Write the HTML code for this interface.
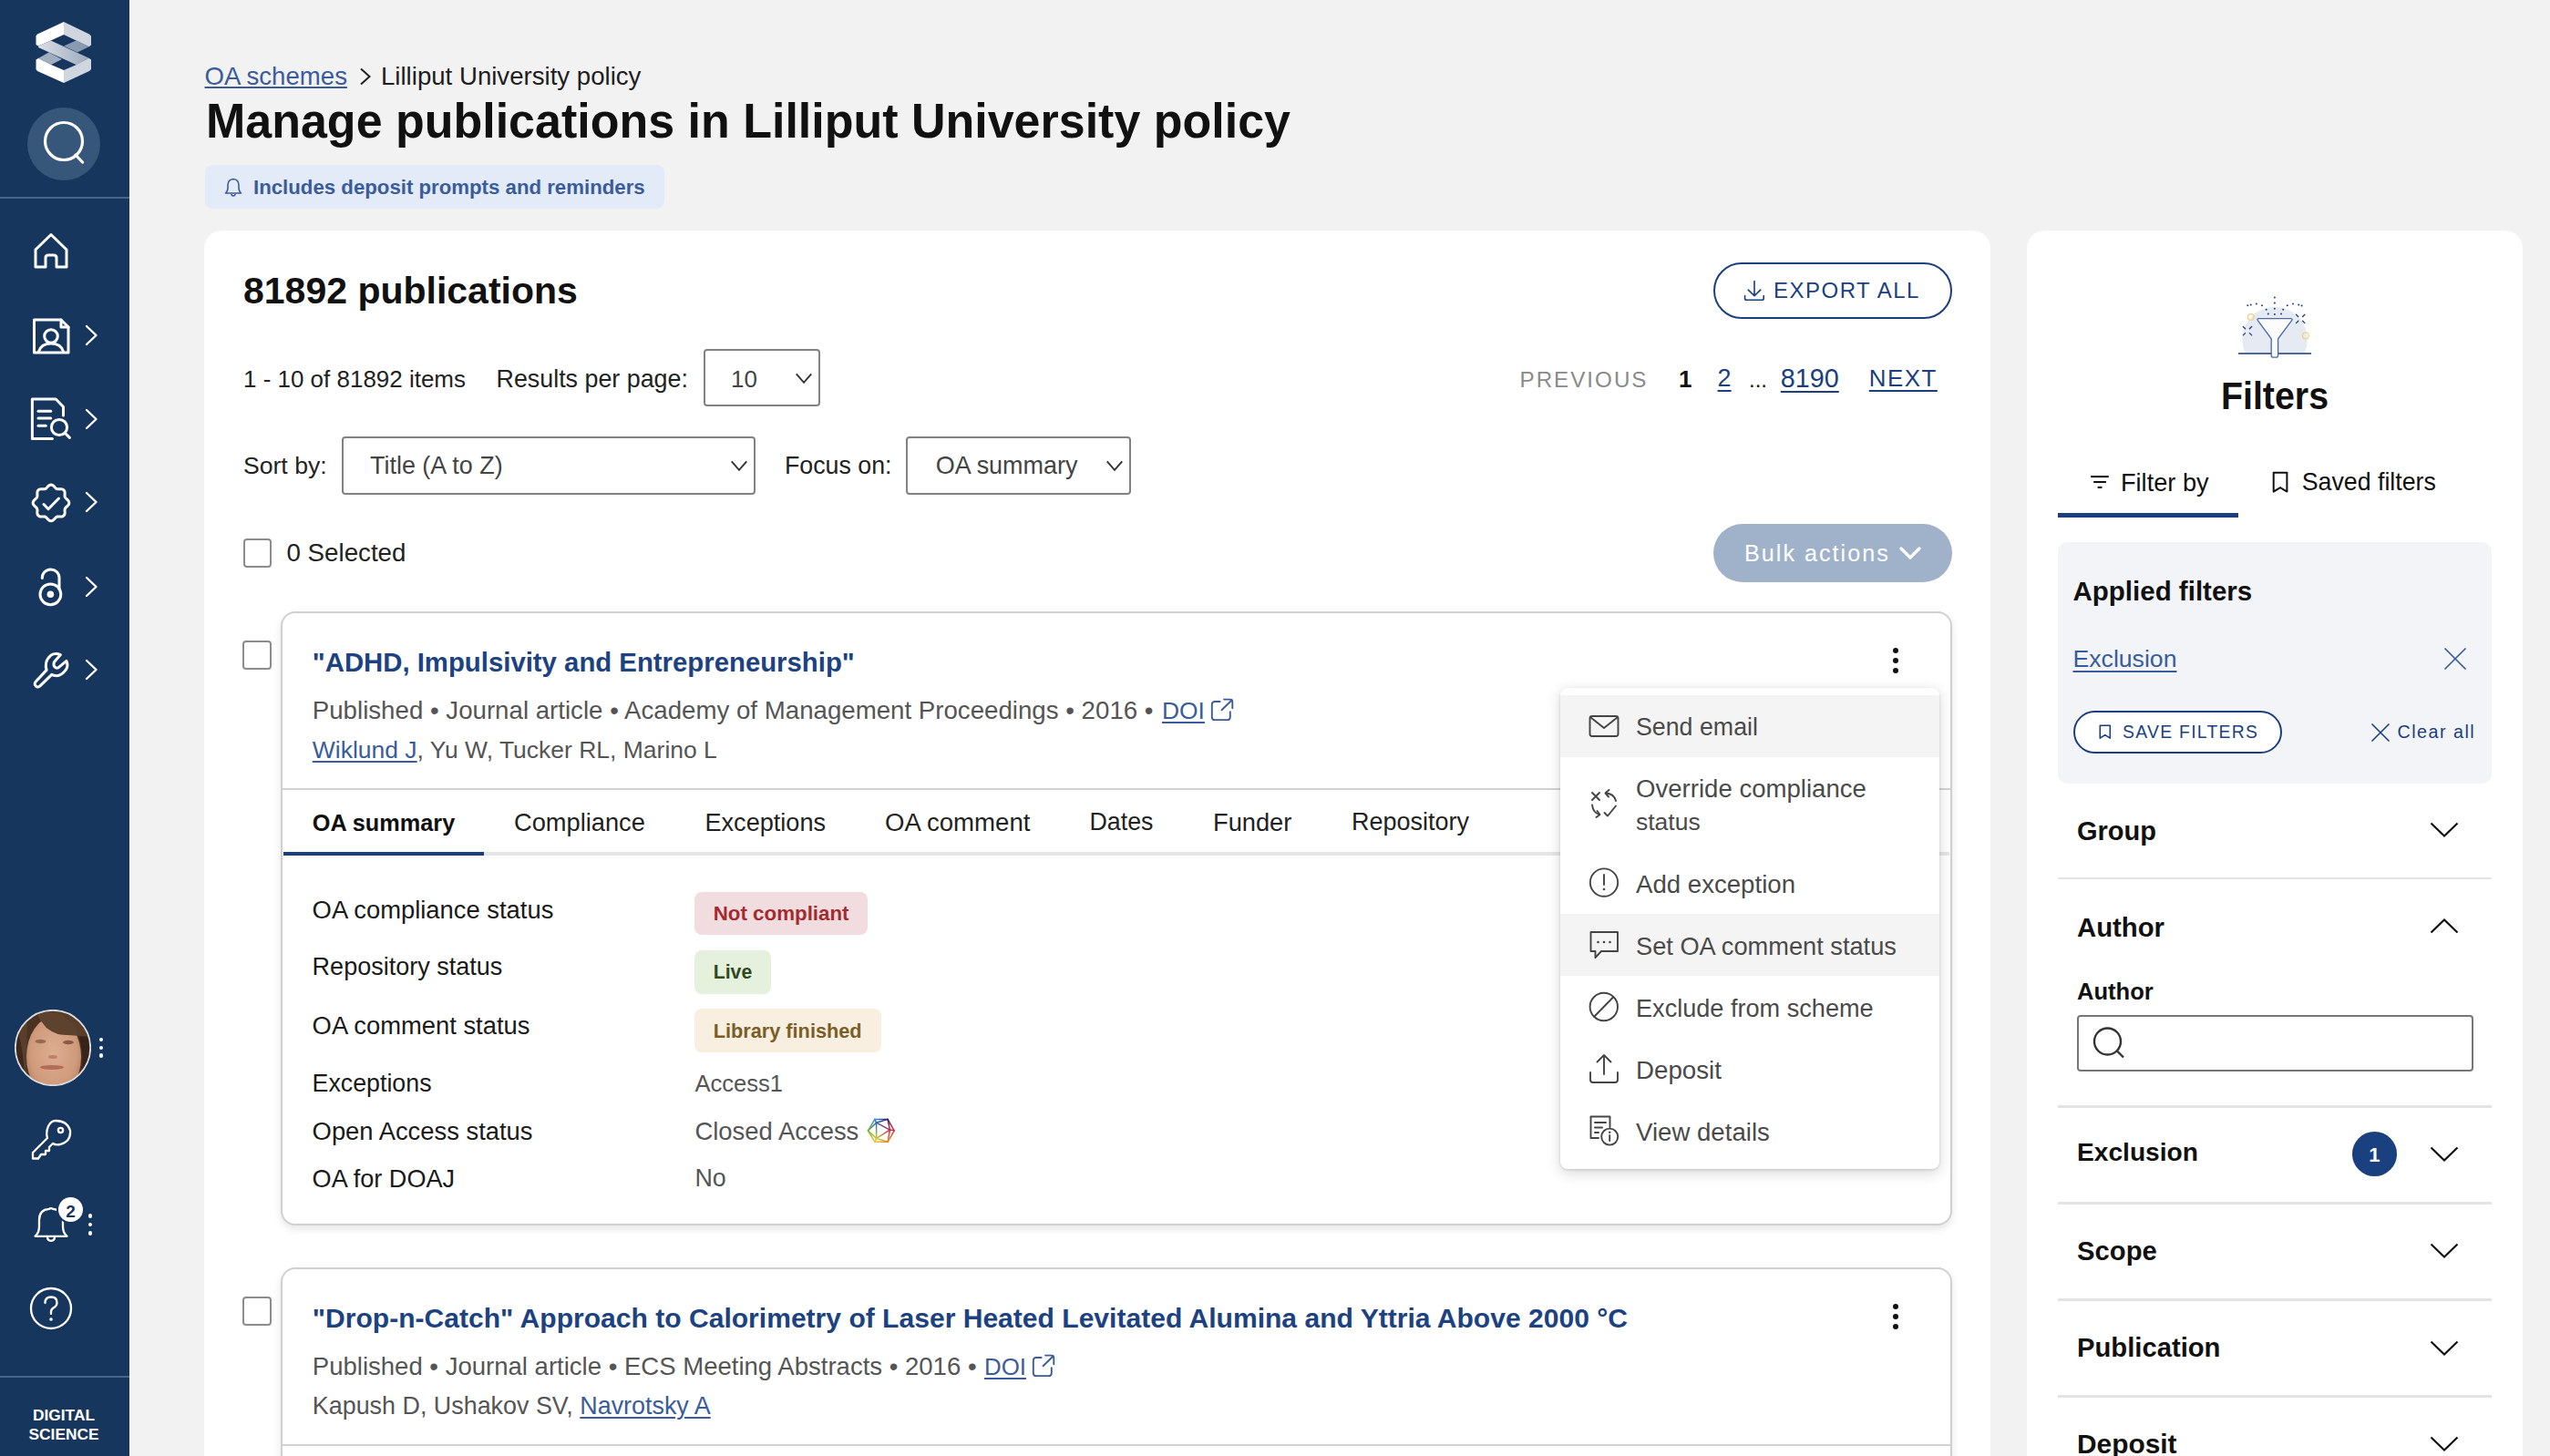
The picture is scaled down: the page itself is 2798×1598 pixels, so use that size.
<!DOCTYPE html><html><head><meta charset="utf-8"><style>
html,body{margin:0;padding:0;width:2798px;height:1598px;overflow:hidden;background:#f2f2f2;font-family:"Liberation Sans", sans-serif}
.a{position:absolute}.t{position:absolute;white-space:nowrap;line-height:1}
</style></head><body>
<div class="a" style="left:0;top:0;width:142px;height:1598px;background:#17365e"></div>
<div class="a" style="left:0;top:216px;width:142px;height:2px;background:#4a6585"></div>
<div class="a" style="left:0;top:1510px;width:142px;height:2px;background:#4a6585"></div>
<svg class="a" style="left:20px;top:10px" width="100" height="100" viewBox="0 0 100 100">
<defs><linearGradient id="lg1" x1="0" x2="1" y1="0" y2="0"><stop offset="0" stop-color="#d9dee6"/><stop offset="1" stop-color="#9dabbd"/></linearGradient></defs>
<polygon fill="#ffffff" points="50,14 21,27.5 19.5,29.5 19.5,39 22,40.5 35.7,34.5 50,28"/>
<polygon fill="#d0d6df" points="50,14 78,27.5 80,29.5 80,39.5 77.6,41.2 63.5,34.5 50,28"/>
<polygon fill="#8a9ab0" points="63.5,34.5 77.6,41.2 65,47.4 50,40.5"/>
<polygon fill="#a1aec0" points="22,54 33.6,47.4 48,55 36,61"/>
<polygon fill="url(#lg1)" points="22,40.5 35.7,34.5 77.6,53.8 64,61.3 22,42"/>
<polygon fill="#ffffff" points="22,54 19.5,55.5 19.5,66 21,68 50,81 50,67 36,61"/>
<polygon fill="#d0d6df" points="50,67 64,61 77.6,53.8 80,55.5 80,66 78,68 50,81"/>
</svg>
<div class="a" style="left:30px;top:118px;width:80px;height:80px;border-radius:50%;background:#36577a"></div>
<svg class="a" style="left:30px;top:118px" width="80" height="80" viewBox="0 0 80 80"><circle cx="40" cy="37" r="20.5" fill="none" stroke="#fff" stroke-width="3.2"/><line x1="53" y1="52" x2="60.5" y2="60" stroke="#fff" stroke-width="3.2" stroke-linecap="round"/></svg>
<svg class="a" style="left:30px;top:250px" width="52" height="52" viewBox="0 0 52 52"><path d="M9,24 L26,7.5 L43,24 L43,43 L32,43 L32,33 Q32,30 29,30 L23,30 Q20,30 20,33 L20,43 L9,43 Z" fill="none" stroke="#fff" stroke-width="3" stroke-linejoin="round" stroke-linecap="round"/></svg>
<svg class="a" style="left:30px;top:343px" width="52" height="52" viewBox="0 0 52 52"><path d="M7.5,8 L37,8 L45,16 L45,44 L7.5,44 Z" fill="none" stroke="#fff" stroke-width="3" stroke-linejoin="round" stroke-linecap="round"/><path d="M37,8 L37,16 L45,16" fill="none" stroke="#fff" stroke-width="3" stroke-linejoin="round" stroke-linecap="round"/><circle cx="26" cy="26" r="7.3" fill="none" stroke="#fff" stroke-width="3" stroke-linejoin="round" stroke-linecap="round"/><path d="M12.5,43 Q15,34 26,34 Q37,34 39.5,43" fill="none" stroke="#fff" stroke-width="3" stroke-linejoin="round" stroke-linecap="round"/></svg>
<svg class="a" style="left:90px;top:355px" width="20" height="26" viewBox="0 0 20 26"><polyline points="5,3 15.5,13 5,23" fill="none" stroke="#fff" stroke-width="2.4" stroke-linejoin="round" stroke-linecap="round"/></svg>
<svg class="a" style="left:30px;top:434px" width="52" height="52" viewBox="0 0 52 52"><path d="M27.4,47.5 L5.4,47.5 L5.4,4 L31.2,4 L39.5,12.5 L39.5,22" fill="none" stroke="#fff" stroke-width="3" stroke-linejoin="round" stroke-linecap="round"/><line x1="12" y1="17.3" x2="25.7" y2="17.3" fill="none" stroke="#fff" stroke-width="3" stroke-linejoin="round" stroke-linecap="round"/><line x1="12" y1="25" x2="25.7" y2="25" fill="none" stroke="#fff" stroke-width="3" stroke-linejoin="round" stroke-linecap="round"/><line x1="12" y1="33.3" x2="20.2" y2="33.3" fill="none" stroke="#fff" stroke-width="3" stroke-linejoin="round" stroke-linecap="round"/><circle cx="35" cy="35" r="8.6" fill="none" stroke="#fff" stroke-width="3" stroke-linejoin="round" stroke-linecap="round"/><line x1="41.2" y1="41.2" x2="46.4" y2="46.4" fill="none" stroke="#fff" stroke-width="3" stroke-linejoin="round" stroke-linecap="round"/></svg>
<svg class="a" style="left:90px;top:447px" width="20" height="26" viewBox="0 0 20 26"><polyline points="5,3 15.5,13 5,23" fill="none" stroke="#fff" stroke-width="2.4" stroke-linejoin="round" stroke-linecap="round"/></svg>
<svg class="a" style="left:30px;top:526px" width="52" height="52" viewBox="0 0 52 52"><path d="M26.00,6.10 L26.77,6.19 L27.53,6.47 L28.25,6.89 L28.92,7.44 L29.55,8.05 L30.13,8.68 L30.68,9.29 L31.22,9.82 L31.77,10.25 L32.35,10.56 L32.98,10.75 L33.67,10.84 L34.43,10.84 L35.25,10.80 L36.11,10.77 L36.99,10.78 L37.85,10.87 L38.66,11.08 L39.39,11.42 L40.00,11.90 L40.48,12.51 L40.82,13.24 L41.03,14.05 L41.12,14.91 L41.13,15.79 L41.10,16.65 L41.06,17.47 L41.06,18.23 L41.15,18.92 L41.34,19.55 L41.65,20.13 L42.08,20.68 L42.61,21.22 L43.22,21.77 L43.85,22.35 L44.46,22.98 L45.01,23.65 L45.43,24.37 L45.71,25.13 L45.80,25.90 L45.71,26.67 L45.43,27.43 L45.01,28.15 L44.46,28.82 L43.85,29.45 L43.22,30.03 L42.61,30.58 L42.08,31.12 L41.65,31.67 L41.34,32.25 L41.15,32.88 L41.06,33.57 L41.06,34.33 L41.10,35.15 L41.13,36.01 L41.12,36.89 L41.03,37.75 L40.82,38.56 L40.48,39.29 L40.00,39.90 L39.39,40.38 L38.66,40.72 L37.85,40.93 L36.99,41.02 L36.11,41.03 L35.25,41.00 L34.43,40.96 L33.67,40.96 L32.98,41.05 L32.35,41.24 L31.77,41.55 L31.22,41.98 L30.68,42.51 L30.13,43.12 L29.55,43.75 L28.92,44.36 L28.25,44.91 L27.53,45.33 L26.77,45.61 L26.00,45.70 L25.23,45.61 L24.47,45.33 L23.75,44.91 L23.08,44.36 L22.45,43.75 L21.87,43.12 L21.32,42.51 L20.78,41.98 L20.23,41.55 L19.65,41.24 L19.02,41.05 L18.33,40.96 L17.57,40.96 L16.75,41.00 L15.89,41.03 L15.01,41.02 L14.15,40.93 L13.34,40.72 L12.61,40.38 L12.00,39.90 L11.52,39.29 L11.18,38.56 L10.97,37.75 L10.88,36.89 L10.87,36.01 L10.90,35.15 L10.94,34.33 L10.94,33.57 L10.85,32.88 L10.66,32.25 L10.35,31.67 L9.92,31.12 L9.39,30.58 L8.78,30.03 L8.15,29.45 L7.54,28.82 L6.99,28.15 L6.57,27.43 L6.29,26.67 L6.20,25.90 L6.29,25.13 L6.57,24.37 L6.99,23.65 L7.54,22.98 L8.15,22.35 L8.78,21.77 L9.39,21.22 L9.92,20.68 L10.35,20.13 L10.66,19.55 L10.85,18.92 L10.94,18.23 L10.94,17.47 L10.90,16.65 L10.87,15.79 L10.88,14.91 L10.97,14.05 L11.18,13.24 L11.52,12.51 L12.00,11.90 L12.61,11.42 L13.34,11.08 L14.15,10.87 L15.01,10.78 L15.89,10.77 L16.75,10.80 L17.57,10.84 L18.33,10.84 L19.02,10.75 L19.65,10.56 L20.23,10.25 L20.78,9.82 L21.32,9.29 L21.87,8.68 L22.45,8.05 L23.08,7.44 L23.75,6.89 L24.47,6.47 L25.23,6.19 L26.00,6.10 Z" fill="none" stroke="#fff" stroke-width="3" stroke-linejoin="round" stroke-linecap="round"/><polyline points="18,27.5 23,32.7 34.5,21" fill="none" stroke="#fff" stroke-width="3" stroke-linejoin="round" stroke-linecap="round"/></svg>
<svg class="a" style="left:90px;top:538px" width="20" height="26" viewBox="0 0 20 26"><polyline points="5,3 15.5,13 5,23" fill="none" stroke="#fff" stroke-width="2.4" stroke-linejoin="round" stroke-linecap="round"/></svg>
<svg class="a" style="left:30px;top:618px" width="52" height="52" viewBox="0 0 52 52"><path d="M16.3,16.5 A9.35,9.35 0 0 1 35,16 L35,28.8" fill="none" stroke="#fff" stroke-width="3" stroke-linejoin="round" stroke-linecap="round"/><circle cx="25.4" cy="34.3" r="11.4" fill="none" stroke="#fff" stroke-width="3" stroke-linejoin="round" stroke-linecap="round"/><circle cx="25.4" cy="34.3" r="3.8" fill="#fff"/></svg>
<svg class="a" style="left:90px;top:631px" width="20" height="26" viewBox="0 0 20 26"><polyline points="5,3 15.5,13 5,23" fill="none" stroke="#fff" stroke-width="2.4" stroke-linejoin="round" stroke-linecap="round"/></svg>
<svg class="a" style="left:30px;top:709px" width="52" height="52" viewBox="0 0 52 52"><path d="M21.1,26.4 C19.5,22 19.8,15 25.7,10.3 C28.5,8.5 33,8.3 36.4,9.6 L29.3,17.8 C28.9,20 29,22 29.6,22.4 C30.5,23.8 32.5,24.4 33.9,23.9 L42.9,16.4 C44.5,20 44,24 41.8,26.7 C39,30.5 35,33 31.1,32.6 C29.5,32.5 28,32 26.8,31.4 L13.9,43.9 C12.5,45.2 10.5,45.3 9.3,43.9 C7.8,42.5 7.8,40.5 9.3,39 Z" fill="none" stroke="#fff" stroke-width="3" stroke-linejoin="round" stroke-linecap="round"/></svg>
<svg class="a" style="left:90px;top:722px" width="20" height="26" viewBox="0 0 20 26"><polyline points="5,3 15.5,13 5,23" fill="none" stroke="#fff" stroke-width="2.4" stroke-linejoin="round" stroke-linecap="round"/></svg>
<svg class="a" style="left:16px;top:1108px" width="84" height="84" viewBox="0 0 84 84">
<defs><clipPath id="avc"><circle cx="42" cy="42" r="41"/></clipPath>
<radialGradient id="skin" cx="0.5" cy="0.45" r="0.6"><stop offset="0" stop-color="#dcae92"/><stop offset="0.7" stop-color="#d09a7c"/><stop offset="1" stop-color="#b07a5a"/></radialGradient></defs>
<g clip-path="url(#avc)">
<rect x="0" y="0" width="84" height="84" fill="#4a3222"/>
<ellipse cx="43" cy="52" rx="30" ry="44" fill="url(#skin)"/>
<path d="M10,0 L84,0 L84,42 Q78,30 70,28.5 Q58,28 48,27 Q40,24 35,20 Q29,13 24,4 Q18,6 14,14 L12,84 L0,84 L0,0 Z" fill="#5a3e2c"/>
<path d="M24,4 Q29,13 35,20 Q40,24 48,27 Q58,28 70,28.5 Q66,14 52,6 Q38,0 24,4 Z" fill="#5e4230"/>
<path d="M71,29 Q77,50 73,84 L84,84 L84,30 Z" fill="#36241a"/>
<path d="M0,18 Q9,30 12,84 L0,84 Z" fill="#3e2a1c"/>
<ellipse cx="28.5" cy="35" rx="6" ry="2.2" fill="#8a5a44" opacity="0.8"/>
<ellipse cx="59" cy="36" rx="6" ry="2.2" fill="#7a4a36" opacity="0.8"/>
<ellipse cx="42" cy="52" rx="5" ry="2" fill="#b07058" opacity="0.7"/>
<ellipse cx="41" cy="63.5" rx="13" ry="2.4" fill="#a85a48" opacity="0.75"/>
</g>
<circle cx="42" cy="42" r="41.2" fill="none" stroke="#dcdcdc" stroke-width="1.8"/>
</svg>
<div class="a" style="left:108.7px;top:1138.9px;width:4.6px;height:4.6px;border-radius:50%;background:#fff"></div>
<div class="a" style="left:108.7px;top:1147.8px;width:4.6px;height:4.6px;border-radius:50%;background:#fff"></div>
<div class="a" style="left:108.7px;top:1156.4px;width:4.6px;height:4.6px;border-radius:50%;background:#fff"></div>
<svg class="a" style="left:30px;top:1225px" width="52" height="52" viewBox="0 0 52 52"><path d="M31,5 Q44,5 47,16 Q48,28 36,31 Q31,32 28,30 L24,34 L24,38 L20,38 L20,42 L15,42 L12,46.5 L6,46.5 L6,40 L22,24 Q20,18 23,11 Q26,5 31,5 Z" fill="none" stroke="#fff" stroke-width="2.3" stroke-linejoin="round" stroke-linecap="round"/><circle cx="36.5" cy="15.5" r="2.6" fill="none" stroke="#fff" stroke-width="2.3" stroke-linejoin="round" stroke-linecap="round"/></svg>
<svg class="a" style="left:30px;top:1318px" width="52" height="52" viewBox="0 0 52 52"><path d="M8.5,38.8 Q13,35 13,28 L13,21 Q13,9.5 24,8.8 Q26,7.5 28,8.8 Q39,9.5 39,21 L39,28 Q39,35 43.5,38.8 Z" fill="none" stroke="#fff" stroke-width="2.3" stroke-linejoin="round" stroke-linecap="round"/><path d="M22,39.3 Q22,43.8 26,43.8 Q30,43.8 30,39.3" fill="none" stroke="#fff" stroke-width="2.3" stroke-linejoin="round" stroke-linecap="round"/></svg>
<div class="a" style="left:64px;top:1313.5px;width:27px;height:27px;border-radius:50%;background:#fff;box-shadow:0 0 0 2px #17365e"></div>
<div class="a" style="left:96.7px;top:1332.1px;width:4.6px;height:4.6px;border-radius:50%;background:#fff"></div>
<div class="a" style="left:96.7px;top:1341.7px;width:4.6px;height:4.6px;border-radius:50%;background:#fff"></div>
<div class="a" style="left:96.7px;top:1351.0px;width:4.6px;height:4.6px;border-radius:50%;background:#fff"></div>
<svg class="a" style="left:30px;top:1410px" width="52" height="52" viewBox="0 0 52 52"><circle cx="26" cy="26" r="22" fill="none" stroke="#fff" stroke-width="2.3" stroke-linejoin="round" stroke-linecap="round"/><path d="M19.5,20 Q19.5,13.5 26,13.5 Q32.5,13.5 32.5,19.5 Q32.5,23.5 28.5,25.5 Q26,27 26,30 L26,32" fill="none" stroke="#fff" stroke-width="2.3" stroke-linejoin="round" stroke-linecap="round"/><circle cx="26" cy="38" r="1.8" fill="#fff"/></svg>
<svg class="a" style="left:390px;top:72px" width="22" height="24" viewBox="0 0 22 24"><polyline points="6,3.5 15.5,12 6,20.5" fill="none" stroke="#222" stroke-width="2"/></svg>
<div class="a" style="left:224.5px;top:181px;width:504.5px;height:48px;border-radius:8px;background:#e3ebf8"></div>
<svg class="a" style="left:244px;top:193px" width="24" height="24" viewBox="0 0 24 24"><path d="M3.5,19 Q6,17 6,13 L6,10.5 Q6,4 12,3.5 Q18,4 18,10.5 L18,13 Q18,17 20.5,19 Z" fill="none" stroke="#3a5c9c" stroke-width="1.6" stroke-linejoin="round"/><path d="M10,20 Q10,22 12,22 Q14,22 14,20" fill="none" stroke="#3a5c9c" stroke-width="1.6"/></svg>
<div class="a" style="left:224px;top:253px;width:1960px;height:1400px;border-radius:20px;background:#fff"></div>
<div class="a" style="left:1879.5px;top:287.5px;width:262px;height:62.5px;box-sizing:border-box;border:2.2px solid #1b3f7e;border-radius:32px"></div>
<svg class="a" style="left:1910px;top:305px" width="30" height="30" viewBox="0 0 30 30"><path d="M15,3.5 L15,19.3 M8.2,13.2 L15,19.6 L21.8,13.2" fill="none" stroke="#1b3f7e" stroke-width="1.6" stroke-linecap="round" stroke-linejoin="round"/><path d="M4.6,19.6 L4.6,22.4 Q4.6,24.3 6.6,24.3 L23.3,24.3 Q25.2,24.3 25.2,22.4 L25.2,19.6" fill="none" stroke="#1b3f7e" stroke-width="1.6" stroke-linecap="round" stroke-linejoin="round"/></svg>
<div class="a" style="left:772.0px;top:383.2px;width:127.7px;height:63.3px;box-sizing:border-box;border:2px solid #828282;border-radius:4px;background:#fff"></div>
<svg class="a" style="left:870.0px;top:404.9px" width="24" height="16" viewBox="0 0 24 16"><polyline points="3.75,5.4 12,14.8 20.25,5.4" fill="none" stroke="#333" stroke-width="1.9"/></svg>
<div class="a" style="left:375.0px;top:478.5px;width:453.7px;height:64.0px;box-sizing:border-box;border:2px solid #828282;border-radius:4px;background:#fff"></div>
<svg class="a" style="left:799.0px;top:500.5px" width="24" height="16" viewBox="0 0 24 16"><polyline points="3.75,5.4 12,14.8 20.25,5.4" fill="none" stroke="#333" stroke-width="1.9"/></svg>
<div class="a" style="left:994.4px;top:479.0px;width:246.3px;height:63.5px;box-sizing:border-box;border:2px solid #828282;border-radius:4px;background:#fff"></div>
<svg class="a" style="left:1211.0px;top:500.8px" width="24" height="16" viewBox="0 0 24 16"><polyline points="3.75,5.4 12,14.8 20.25,5.4" fill="none" stroke="#333" stroke-width="1.9"/></svg>
<div class="a" style="left:266.5px;top:591.0px;width:31.5px;height:31.5px;box-sizing:border-box;border:2px solid #8c8c8c;border-radius:4px;background:#fff"></div>
<div class="a" style="left:1879.5px;top:575px;width:262px;height:64px;border-radius:32px;background:#a0b2ca"></div>
<svg class="a" style="left:2082px;top:598px" width="28" height="20" viewBox="0 0 28 20"><polyline points="4,4 14,14 24,4" fill="none" stroke="#fff" stroke-width="3.2" stroke-linecap="round" stroke-linejoin="round"/></svg>
<div class="a" style="left:308px;top:671.0px;width:1834px;height:674.0px;box-sizing:border-box;border:2px solid #d0d0d0;border-radius:16px;background:#fff;box-shadow:0 4px 8px rgba(0,0,0,0.10)"></div>
<div class="a" style="left:266.0px;top:703.0px;width:31.5px;height:31.5px;box-sizing:border-box;border:2px solid #8c8c8c;border-radius:4px;background:#fff"></div>
<div class="a" style="left:2076.9px;top:710.9px;width:6.2px;height:6.2px;border-radius:50%;background:#111"></div>
<div class="a" style="left:2076.9px;top:721.9px;width:6.2px;height:6.2px;border-radius:50%;background:#111"></div>
<div class="a" style="left:2076.9px;top:732.9px;width:6.2px;height:6.2px;border-radius:50%;background:#111"></div>
<svg class="a" style="left:1328.0px;top:764.0px" width="28" height="30" viewBox="0 0 28 30"><path d="M10.6,6 L5,6 Q1.8,6 1.8,9.2 L1.8,22.9 Q1.8,26.1 5,26.1 L18.6,26.1 Q21.8,26.1 21.8,22.9 L21.8,17.2" fill="none" stroke="#3a5c9c" stroke-width="1.9" stroke-linecap="round" stroke-linejoin="round"/><path d="M12.5,15.3 L23.8,4.2 M15,3.6 L21.5,3.6 Q24.3,3.6 24.3,6.4 L24.3,13.3" fill="none" stroke="#3a5c9c" stroke-width="1.9" stroke-linecap="round" stroke-linejoin="round"/></svg>
<div class="a" style="left:309px;top:865.0px;width:1832px;height:2px;background:#d2d2d2"></div>
<div class="a" style="left:308px;top:1391.0px;width:1834px;height:310.0px;box-sizing:border-box;border:2px solid #d0d0d0;border-radius:16px;background:#fff;box-shadow:0 4px 8px rgba(0,0,0,0.10)"></div>
<div class="a" style="left:266.0px;top:1423.0px;width:31.5px;height:31.5px;box-sizing:border-box;border:2px solid #8c8c8c;border-radius:4px;background:#fff"></div>
<div class="a" style="left:2076.9px;top:1430.9px;width:6.2px;height:6.2px;border-radius:50%;background:#111"></div>
<div class="a" style="left:2076.9px;top:1441.9px;width:6.2px;height:6.2px;border-radius:50%;background:#111"></div>
<div class="a" style="left:2076.9px;top:1452.9px;width:6.2px;height:6.2px;border-radius:50%;background:#111"></div>
<svg class="a" style="left:1132.0px;top:1484.0px" width="28" height="30" viewBox="0 0 28 30"><path d="M10.6,6 L5,6 Q1.8,6 1.8,9.2 L1.8,22.9 Q1.8,26.1 5,26.1 L18.6,26.1 Q21.8,26.1 21.8,22.9 L21.8,17.2" fill="none" stroke="#3a5c9c" stroke-width="1.9" stroke-linecap="round" stroke-linejoin="round"/><path d="M12.5,15.3 L23.8,4.2 M15,3.6 L21.5,3.6 Q24.3,3.6 24.3,6.4 L24.3,13.3" fill="none" stroke="#3a5c9c" stroke-width="1.9" stroke-linecap="round" stroke-linejoin="round"/></svg>
<div class="a" style="left:309px;top:1585.0px;width:1832px;height:2px;background:#d2d2d2"></div>
<div class="a" style="left:311px;top:935px;width:1828px;height:4px;background:#e6e6e6"></div>
<div class="a" style="left:311px;top:934.5px;width:220px;height:4.5px;background:#1b3f7e"></div>
<div class="a" style="left:762.0px;top:978.8px;width:190.0px;height:47.6px;border-radius:8px;background:#f1dde0"></div>
<div class="a" style="left:762.0px;top:1042.9px;width:84.0px;height:47.8px;border-radius:8px;background:#e6f1dd"></div>
<div class="a" style="left:762.0px;top:1107.0px;width:204.8px;height:47.7px;border-radius:8px;background:#f8efe0"></div>
<svg class="a" style="left:950px;top:1226px" width="34" height="30" viewBox="0 0 34 30"><defs><linearGradient id="dg0" gradientUnits="userSpaceOnUse" x1="9.9" y1="2.4" x2="24.0" y2="2.4"><stop offset="0" stop-color="#3a8fd8"/><stop offset="1" stop-color="#3a1f70"/></linearGradient><linearGradient id="dg1" gradientUnits="userSpaceOnUse" x1="24.0" y1="2.4" x2="31.2" y2="14.8"><stop offset="0" stop-color="#3a1f70"/><stop offset="1" stop-color="#d8383a"/></linearGradient><linearGradient id="dg2" gradientUnits="userSpaceOnUse" x1="31.2" y1="14.8" x2="24.0" y2="27.3"><stop offset="0" stop-color="#d8383a"/><stop offset="1" stop-color="#e88a28"/></linearGradient><linearGradient id="dg3" gradientUnits="userSpaceOnUse" x1="24.0" y1="27.3" x2="9.9" y2="27.3"><stop offset="0" stop-color="#e88a28"/><stop offset="1" stop-color="#e8c838"/></linearGradient><linearGradient id="dg4" gradientUnits="userSpaceOnUse" x1="9.9" y1="27.3" x2="2.5" y2="15.0"><stop offset="0" stop-color="#e8c838"/><stop offset="1" stop-color="#78b838"/></linearGradient><linearGradient id="dg5" gradientUnits="userSpaceOnUse" x1="2.5" y1="15.0" x2="9.9" y2="2.4"><stop offset="0" stop-color="#78b838"/><stop offset="1" stop-color="#3a8fd8"/></linearGradient><linearGradient id="dg6" gradientUnits="userSpaceOnUse" x1="11.6" y1="6.2" x2="24.0" y2="2.4"><stop offset="0" stop-color="#3060b0"/><stop offset="1" stop-color="#3a1f70"/></linearGradient><linearGradient id="dg7" gradientUnits="userSpaceOnUse" x1="11.6" y1="6.2" x2="26.4" y2="14.1"><stop offset="0" stop-color="#3060b0"/><stop offset="1" stop-color="#c02850"/></linearGradient><linearGradient id="dg8" gradientUnits="userSpaceOnUse" x1="11.6" y1="6.2" x2="11.6" y2="23.4"><stop offset="0" stop-color="#3060b0"/><stop offset="1" stop-color="#c8c838"/></linearGradient><linearGradient id="dg9" gradientUnits="userSpaceOnUse" x1="11.6" y1="6.2" x2="9.9" y2="2.4"><stop offset="0" stop-color="#3060b0"/><stop offset="1" stop-color="#3a8fd8"/></linearGradient><linearGradient id="dg10" gradientUnits="userSpaceOnUse" x1="11.6" y1="6.2" x2="2.5" y2="15.0"><stop offset="0" stop-color="#3060b0"/><stop offset="1" stop-color="#78b838"/></linearGradient><linearGradient id="dg11" gradientUnits="userSpaceOnUse" x1="26.4" y1="14.1" x2="31.2" y2="14.8"><stop offset="0" stop-color="#c02850"/><stop offset="1" stop-color="#d8383a"/></linearGradient><linearGradient id="dg12" gradientUnits="userSpaceOnUse" x1="26.4" y1="14.1" x2="24.0" y2="2.4"><stop offset="0" stop-color="#c02850"/><stop offset="1" stop-color="#3a1f70"/></linearGradient><linearGradient id="dg13" gradientUnits="userSpaceOnUse" x1="26.4" y1="14.1" x2="24.0" y2="27.3"><stop offset="0" stop-color="#c02850"/><stop offset="1" stop-color="#e88a28"/></linearGradient><linearGradient id="dg14" gradientUnits="userSpaceOnUse" x1="26.4" y1="14.1" x2="11.6" y2="23.4"><stop offset="0" stop-color="#c02850"/><stop offset="1" stop-color="#c8c838"/></linearGradient><linearGradient id="dg15" gradientUnits="userSpaceOnUse" x1="11.6" y1="23.4" x2="2.5" y2="15.0"><stop offset="0" stop-color="#c8c838"/><stop offset="1" stop-color="#78b838"/></linearGradient><linearGradient id="dg16" gradientUnits="userSpaceOnUse" x1="11.6" y1="23.4" x2="9.9" y2="27.3"><stop offset="0" stop-color="#c8c838"/><stop offset="1" stop-color="#e8c838"/></linearGradient><linearGradient id="dg17" gradientUnits="userSpaceOnUse" x1="11.6" y1="23.4" x2="24.0" y2="27.3"><stop offset="0" stop-color="#c8c838"/><stop offset="1" stop-color="#e88a28"/></linearGradient></defs><line x1="9.9" y1="2.4" x2="24.0" y2="2.4" stroke="url(#dg0)" stroke-width="1.5" stroke-linecap="round"/><line x1="24.0" y1="2.4" x2="31.2" y2="14.8" stroke="url(#dg1)" stroke-width="1.5" stroke-linecap="round"/><line x1="31.2" y1="14.8" x2="24.0" y2="27.3" stroke="url(#dg2)" stroke-width="1.5" stroke-linecap="round"/><line x1="24.0" y1="27.3" x2="9.9" y2="27.3" stroke="url(#dg3)" stroke-width="1.5" stroke-linecap="round"/><line x1="9.9" y1="27.3" x2="2.5" y2="15.0" stroke="url(#dg4)" stroke-width="1.5" stroke-linecap="round"/><line x1="2.5" y1="15.0" x2="9.9" y2="2.4" stroke="url(#dg5)" stroke-width="1.5" stroke-linecap="round"/><line x1="11.6" y1="6.2" x2="24.0" y2="2.4" stroke="url(#dg6)" stroke-width="1.5" stroke-linecap="round"/><line x1="11.6" y1="6.2" x2="26.4" y2="14.1" stroke="url(#dg7)" stroke-width="1.5" stroke-linecap="round"/><line x1="11.6" y1="6.2" x2="11.6" y2="23.4" stroke="url(#dg8)" stroke-width="1.5" stroke-linecap="round"/><line x1="11.6" y1="6.2" x2="9.9" y2="2.4" stroke="url(#dg9)" stroke-width="1.5" stroke-linecap="round"/><line x1="11.6" y1="6.2" x2="2.5" y2="15.0" stroke="url(#dg10)" stroke-width="1.5" stroke-linecap="round"/><line x1="26.4" y1="14.1" x2="31.2" y2="14.8" stroke="url(#dg11)" stroke-width="1.5" stroke-linecap="round"/><line x1="26.4" y1="14.1" x2="24.0" y2="2.4" stroke="url(#dg12)" stroke-width="1.5" stroke-linecap="round"/><line x1="26.4" y1="14.1" x2="24.0" y2="27.3" stroke="url(#dg13)" stroke-width="1.5" stroke-linecap="round"/><line x1="26.4" y1="14.1" x2="11.6" y2="23.4" stroke="url(#dg14)" stroke-width="1.5" stroke-linecap="round"/><line x1="11.6" y1="23.4" x2="2.5" y2="15.0" stroke="url(#dg15)" stroke-width="1.5" stroke-linecap="round"/><line x1="11.6" y1="23.4" x2="9.9" y2="27.3" stroke="url(#dg16)" stroke-width="1.5" stroke-linecap="round"/><line x1="11.6" y1="23.4" x2="24.0" y2="27.3" stroke="url(#dg17)" stroke-width="1.5" stroke-linecap="round"/></svg>
<div class="a" style="left:2224px;top:253px;width:544px;height:1400px;border-radius:20px;background:#fff"></div>
<svg class="a" style="left:2440px;top:310px" width="110" height="90" viewBox="0 0 110 90">
<path d="M23.9,78 A35.7,35.7 0 1 1 88.3,78 Z" fill="#e6eaf2"/>
<line x1="16" y1="78" x2="96" y2="78" stroke="#4a6aa0" stroke-width="1.9"/>
<path d="M38.5,39.6 L73.5,39.6 Q76,39.6 74.5,42 L59.6,61.8 L59.6,80 Q59.6,82.2 57.5,82.2 L54.3,82.2 Q52.2,82.2 52.2,80 L52.2,61.8 L37.5,42 Q36,39.6 38.5,39.6 Z" fill="#fcfcfd" stroke="#4a6aa8" stroke-width="1.3"/>
<g fill="#1f3f7a"><circle cx="55.9" cy="16.4" r="1"/><circle cx="55.9" cy="22.6" r="1"/><circle cx="55.9" cy="28.7" r="1"/><circle cx="55.9" cy="34.9" r="1"/>
<circle cx="46.7" cy="29.7" r="1"/><circle cx="65.2" cy="29.7" r="1"/><circle cx="48.8" cy="34.6" r="1"/><circle cx="63" cy="34.6" r="1"/>
<circle cx="26.3" cy="25.3" r="1"/><circle cx="29.7" cy="24.6" r="1"/><circle cx="35.8" cy="23.6" r="1"/><circle cx="42" cy="25.3" r="1"/>
<circle cx="69.8" cy="25.3" r="1"/><circle cx="76" cy="23.6" r="1"/><circle cx="82.2" cy="24.6" r="1"/><circle cx="85.6" cy="25.5" r="1"/></g>
<g stroke="#1f3f7a" stroke-width="1.3" stroke-linecap="round"><path d="M79.5,35.2 L81.8,37.5 M88.9,35.2 L86.6,37.5 M79.5,44.6 L81.8,42.3 M88.9,44.6 L86.6,42.3"/><path d="M21.3,48.5 L23.6,50.8 M30.7,48.5 L28.4,50.8 M21.3,57.9 L23.6,55.6 M30.7,57.9 L28.4,55.6"/></g>
<circle cx="29.8" cy="38" r="3.4" fill="none" stroke="#f0d080" stroke-width="1.2"/>
<circle cx="89.9" cy="58.4" r="3.4" fill="none" stroke="#f0d080" stroke-width="1.2"/>
</svg>
<svg class="a" style="left:2290px;top:515px" width="28" height="28" viewBox="0 0 28 28"><line x1="4.2" y1="8.1" x2="23.8" y2="8.1" stroke="#111" stroke-width="2.1"/><line x1="7.2" y1="14" x2="20.9" y2="14" stroke="#111" stroke-width="2.1"/><line x1="11.6" y1="19.9" x2="16.5" y2="19.9" stroke="#111" stroke-width="2.1"/></svg>
<svg class="a" style="left:2490px;top:516px" width="24" height="28" viewBox="0 0 24 28"><path d="M4.7,2.7 L19.4,2.7 L19.4,23.6 L12,19.2 L4.7,23.6 Z" fill="none" stroke="#111" stroke-width="2" stroke-linejoin="round"/></svg>
<div class="a" style="left:2258px;top:563px;width:198px;height:4.5px;background:#1b3f7e"></div>
<div class="a" style="left:2258px;top:595px;width:476px;height:264.5px;border-radius:10px;background:#f2f4f8"></div>
<svg class="a" style="left:2678px;top:707px" width="32" height="32" viewBox="0 0 32 32"><path d="M4.5,4.5 L27.5,27.5 M27.5,4.5 L4.5,27.5" stroke="#3a5c9c" stroke-width="1.7" fill="none"/></svg>
<div class="a" style="left:2274.5px;top:779.7px;width:229.5px;height:47px;box-sizing:border-box;border:2.2px solid #1b3f7e;border-radius:24px;background:#fff"></div>
<svg class="a" style="left:2300px;top:793px" width="20" height="20" viewBox="0 0 20 20"><path d="M4.3,3.2 L15.3,3.2 L15.3,17.2 L9.8,13.6 L4.3,17.2 Z" fill="none" stroke="#1b3f7e" stroke-width="1.6" stroke-linejoin="round"/></svg>
<svg class="a" style="left:2598px;top:790px" width="28" height="28" viewBox="0 0 28 28"><path d="M4.5,4.5 L23.5,23.5 M23.5,4.5 L4.5,23.5" stroke="#1b3f7e" stroke-width="1.6" fill="none"/></svg>
<svg class="a" style="left:2666px;top:900.7px" width="32" height="20" viewBox="0 0 32 20"><polyline points="1.5,2.5 16,16.5 30.5,2.5" fill="none" stroke="#111" stroke-width="2.2"/></svg>
<div class="a" style="left:2258px;top:962.5px;width:476px;height:2.5px;background:#e3e3e3"></div>
<svg class="a" style="left:2666px;top:1006.5px" width="32" height="20" viewBox="0 0 32 20"><polyline points="1.5,16.5 16,2.5 30.5,16.5" fill="none" stroke="#111" stroke-width="2.2"/></svg>
<div class="a" style="left:2278.6px;top:1113.8px;width:435px;height:62.5px;box-sizing:border-box;border:2px solid #777;border-radius:4px;background:#fff"></div>
<svg class="a" style="left:2292px;top:1123px" width="44" height="44" viewBox="0 0 44 44"><circle cx="20.5" cy="20" r="14.5" fill="none" stroke="#333" stroke-width="2.4"/><line x1="31" y1="30.5" x2="38" y2="37.5" stroke="#333" stroke-width="2.4"/></svg>
<div class="a" style="left:2258px;top:1213.0px;width:476px;height:2.5px;background:#e3e3e3"></div>
<div class="a" style="left:2581px;top:1242.4px;width:48.8px;height:48.8px;border-radius:50%;background:#1b4080"></div>
<svg class="a" style="left:2666px;top:1257.0px" width="32" height="20" viewBox="0 0 32 20"><polyline points="1.5,2.5 16,16.5 30.5,2.5" fill="none" stroke="#111" stroke-width="2.2"/></svg>
<div class="a" style="left:2258px;top:1319.0px;width:476px;height:2.5px;background:#e3e3e3"></div>
<svg class="a" style="left:2666px;top:1363.0px" width="32" height="20" viewBox="0 0 32 20"><polyline points="1.5,2.5 16,16.5 30.5,2.5" fill="none" stroke="#111" stroke-width="2.2"/></svg>
<div class="a" style="left:2258px;top:1425.0px;width:476px;height:2.5px;background:#e3e3e3"></div>
<svg class="a" style="left:2666px;top:1469.5px" width="32" height="20" viewBox="0 0 32 20"><polyline points="1.5,2.5 16,16.5 30.5,2.5" fill="none" stroke="#111" stroke-width="2.2"/></svg>
<div class="a" style="left:2258px;top:1531.0px;width:476px;height:2.5px;background:#e3e3e3"></div>
<svg class="a" style="left:2666px;top:1575.0px" width="32" height="20" viewBox="0 0 32 20"><polyline points="1.5,2.5 16,16.5 30.5,2.5" fill="none" stroke="#111" stroke-width="2.2"/></svg>
<div class="t" style="left:77.60px;top:1319.92px;font-size:19.000px;font-weight:700;color:#17365e;transform:translateX(-50%);">2</div>
<div class="t" style="left:70.00px;top:1544.74px;font-size:17.323px;font-weight:700;color:#fff;transform:translateX(-50%);">DIGITAL</div>
<div class="t" style="left:70.00px;top:1566.34px;font-size:17.322px;font-weight:700;color:#fff;transform:translateX(-50%);">SCIENCE</div>
<div class="t" style="left:224.50px;top:69.63px;font-size:27.606px;font-weight:400;color:#3a5c9c;text-decoration:underline;text-decoration-thickness:2px;text-underline-offset:2px;">OA schemes</div>
<div class="t" style="left:418.00px;top:69.62px;font-size:27.618px;font-weight:400;color:#1e1e1e;">Lilliput University policy</div>
<div class="t" style="left:225.70px;top:106.34px;font-size:53.000px;font-weight:700;color:#111;transform:scaleX(0.9808);transform-origin:0 0;">Manage publications in Lilliput University policy</div>
<div class="t" style="left:278.00px;top:195.18px;font-size:22.237px;font-weight:700;color:#3a5c9c;">Includes deposit prompts and reminders</div>
<div class="t" style="left:267.00px;top:298.78px;font-size:41.016px;font-weight:700;color:#111;">81892 publications</div>
<div class="t" style="left:1946.00px;top:306.67px;font-size:24.019px;font-weight:400;color:#1b3f7e;letter-spacing:1.5px;">EXPORT ALL</div>
<div class="t" style="left:267.00px;top:403.71px;font-size:25.972px;font-weight:400;color:#222;">1 - 10 of 81892 items</div>
<div class="t" style="left:544.50px;top:402.97px;font-size:26.855px;font-weight:400;color:#222;">Results per page:</div>
<div class="t" style="left:802.00px;top:402.84px;font-size:26.000px;font-weight:400;color:#444;">10</div>
<div class="t" style="left:267.00px;top:498.30px;font-size:26.582px;font-weight:400;color:#222;">Sort by:</div>
<div class="t" style="left:406.00px;top:497.68px;font-size:26.957px;font-weight:400;color:#444;">Title (A to Z)</div>
<div class="t" style="left:861.00px;top:498.13px;font-size:26.781px;font-weight:400;color:#222;">Focus on:</div>
<div class="t" style="left:1026.70px;top:497.93px;font-size:26.960px;font-weight:400;color:#444;">OA summary</div>
<div class="t" style="left:1667.50px;top:404.51px;font-size:24.206px;font-weight:400;color:#8a8a8a;letter-spacing:2px;">PREVIOUS</div>
<div class="t" style="left:1842.00px;top:402.99px;font-size:26.000px;font-weight:700;color:#111;">1</div>
<div class="t" style="left:1884.60px;top:402.14px;font-size:27.000px;font-weight:400;color:#1b3f7e;text-decoration:underline;text-underline-offset:4px;text-decoration-thickness:2px;">2</div>
<div class="t" style="left:1919.00px;top:404.68px;font-size:24.000px;font-weight:400;color:#111;">...</div>
<div class="t" style="left:1953.80px;top:400.65px;font-size:28.767px;font-weight:400;color:#1b3f7e;text-decoration:underline;text-underline-offset:4px;text-decoration-thickness:2px;">8190</div>
<div class="t" style="left:2050.80px;top:403.09px;font-size:25.881px;font-weight:400;color:#1b3f7e;letter-spacing:1.5px;text-decoration:underline;text-underline-offset:4px;text-decoration-thickness:2px;">NEXT</div>
<div class="t" style="left:314.50px;top:592.54px;font-size:27.719px;font-weight:400;color:#222;">0 Selected</div>
<div class="t" style="left:1914.00px;top:594.68px;font-size:25.189px;font-weight:400;color:#fff;letter-spacing:2px;">Bulk actions</div>
<div class="t" style="left:342.80px;top:712.17px;font-size:29.332px;font-weight:700;color:#1c4282;">"ADHD, Impulsivity and Entrepreneurship"</div>
<div class="t" style="left:342.80px;top:766.28px;font-size:27.671px;font-weight:400;color:#555;">Published • Journal article • Academy of Management Proceedings • 2016 •</div>
<div class="t" style="left:1275.00px;top:767.33px;font-size:26.429px;font-weight:400;color:#3a5c9c;text-decoration:underline;text-decoration-thickness:2px;text-underline-offset:3px;">DOI</div>
<div class="t" style="left:342.80px;top:810.47px;font-size:26.494px;font-weight:400;color:#555;"><span style="text-decoration:underline;text-decoration-thickness:2px;text-underline-offset:3px;color:#3a5c9c">Wiklund J</span>, Yu W, Tucker RL, Marino L</div>
<div class="t" style="left:342.80px;top:1431.54px;font-size:30.079px;font-weight:700;color:#1c4282;">"Drop-n-Catch" Approach to Calorimetry of Laser Heated Levitated Alumina and Yttria Above 2000 °C</div>
<div class="t" style="left:342.80px;top:1486.38px;font-size:27.549px;font-weight:400;color:#555;">Published • Journal article • ECS Meeting Abstracts • 2016 •</div>
<div class="t" style="left:1080.00px;top:1487.80px;font-size:25.867px;font-weight:400;color:#3a5c9c;text-decoration:underline;text-decoration-thickness:2px;text-underline-offset:3px;">DOI</div>
<div class="t" style="left:342.80px;top:1530.12px;font-size:26.907px;font-weight:400;color:#555;">Kapush D, Ushakov SV, <span style="text-decoration:underline;text-decoration-thickness:2px;text-underline-offset:3px;color:#3a5c9c">Navrotsky A</span></div>
<div class="t" style="left:342.80px;top:890.59px;font-size:25.293px;font-weight:700;color:#111;">OA summary</div>
<div class="t" style="left:564.00px;top:888.92px;font-size:27.269px;font-weight:400;color:#222;">Compliance</div>
<div class="t" style="left:773.50px;top:889.05px;font-size:27.107px;font-weight:400;color:#222;">Exceptions</div>
<div class="t" style="left:971.00px;top:888.64px;font-size:27.595px;font-weight:400;color:#222;">OA comment</div>
<div class="t" style="left:1195.50px;top:889.32px;font-size:26.791px;font-weight:400;color:#222;">Dates</div>
<div class="t" style="left:1331.00px;top:888.92px;font-size:27.264px;font-weight:400;color:#222;">Funder</div>
<div class="t" style="left:1483.00px;top:889.16px;font-size:26.987px;font-weight:400;color:#222;">Repository</div>
<div class="t" style="left:342.60px;top:984.51px;font-size:27.399px;font-weight:400;color:#1a1a1a;">OA compliance status</div>
<div class="t" style="left:342.60px;top:1048.12px;font-size:27.027px;font-weight:400;color:#1a1a1a;">Repository status</div>
<div class="t" style="left:342.60px;top:1112.21px;font-size:27.390px;font-weight:400;color:#1a1a1a;">OA comment status</div>
<div class="t" style="left:342.60px;top:1175.93px;font-size:26.780px;font-weight:400;color:#1a1a1a;">Exceptions</div>
<div class="t" style="left:342.60px;top:1227.62px;font-size:27.382px;font-weight:400;color:#1a1a1a;">Open Access status</div>
<div class="t" style="left:342.60px;top:1280.06px;font-size:27.096px;font-weight:400;color:#1a1a1a;">OA for DOAJ</div>
<div class="t" style="left:782.70px;top:992.08px;font-size:22.348px;font-weight:700;color:#a52a2e;">Not compliant</div>
<div class="t" style="left:782.70px;top:1057.08px;font-size:21.286px;font-weight:700;color:#2e4a1e;">Live</div>
<div class="t" style="left:782.70px;top:1120.81px;font-size:21.727px;font-weight:700;color:#7b5e27;">Library finished</div>
<div class="t" style="left:762.40px;top:1176.94px;font-size:25.585px;font-weight:400;color:#555;">Access1</div>
<div class="t" style="left:762.40px;top:1227.57px;font-size:27.443px;font-weight:400;color:#555;">Closed Access</div>
<div class="t" style="left:762.40px;top:1280.29px;font-size:26.831px;font-weight:400;color:#555;">No</div>
<div class="t" style="left:2496.00px;top:414.15px;font-size:42.000px;font-weight:700;color:#111;transform:translateX(-50%) scaleX(0.9362);">Filters</div>
<div class="t" style="left:2327.00px;top:516.01px;font-size:27.162px;font-weight:400;color:#111;">Filter by</div>
<div class="t" style="left:2525.70px;top:516.34px;font-size:26.767px;font-weight:400;color:#111;">Saved filters</div>
<div class="t" style="left:2274.50px;top:634.03px;font-size:29.500px;font-weight:700;color:#111;">Applied filters</div>
<div class="t" style="left:2274.50px;top:710.45px;font-size:26.635px;font-weight:400;color:#3a5c9c;text-decoration:underline;text-decoration-thickness:2px;text-underline-offset:4px;">Exclusion</div>
<div class="t" style="left:2329.00px;top:793.62px;font-size:19.350px;font-weight:400;color:#1b3f7e;letter-spacing:1.3px;">SAVE FILTERS</div>
<div class="t" style="left:2630.40px;top:794.30px;font-size:19.733px;font-weight:400;color:#1b3f7e;letter-spacing:1.5px;">Clear all</div>
<div class="t" style="left:2279.00px;top:898.45px;font-size:29.000px;font-weight:700;color:#111;">Group</div>
<div class="t" style="left:2279.00px;top:1003.20px;font-size:29.294px;font-weight:700;color:#111;">Author</div>
<div class="t" style="left:2279.00px;top:1076.16px;font-size:25.569px;font-weight:700;color:#111;">Author</div>
<div class="t" style="left:2279.00px;top:1250.67px;font-size:28.154px;font-weight:700;color:#111;">Exclusion</div>
<div class="t" style="left:2605.40px;top:1257.38px;font-size:22.000px;font-weight:700;color:#fff;transform:translateX(-50%);">1</div>
<div class="t" style="left:2279.00px;top:1359.43px;font-size:29.257px;font-weight:700;color:#111;">Scope</div>
<div class="t" style="left:2279.00px;top:1465.26px;font-size:29.223px;font-weight:700;color:#111;">Publication</div>
<div class="t" style="left:2279.00px;top:1569.70px;font-size:29.887px;font-weight:700;color:#111;">Deposit</div>
<div class="a" style="left:1712px;top:755px;width:416px;height:528px;border-radius:8px;background:#fff;box-shadow:0 1px 3px rgba(0,0,0,0.14), 0 4px 16px rgba(0,0,0,0.16)"></div>
<div class="a" style="left:1712px;top:763px;width:416px;height:68px;background:#f4f4f4"></div>
<div class="a" style="left:1712px;top:1003px;width:416px;height:67.5px;background:#f4f4f4"></div>
<svg class="a" style="left:1740px;top:780px" width="40" height="34" viewBox="0 0 40 34"><rect x="4.5" y="6" width="31" height="22" rx="2.5" fill="none" stroke="#444" stroke-width="1.9" stroke-linecap="round" stroke-linejoin="round"/><polyline points="5.5,7.5 20,19 34.5,7.5" fill="none" stroke="#444" stroke-width="1.9" stroke-linecap="round" stroke-linejoin="round"/></svg>
<svg class="a" style="left:1740px;top:863px" width="40" height="40" viewBox="0 0 40 40">
<path d="M7,7 L15,15 M15,7 L7,15" fill="none" stroke="#444" stroke-width="1.9" stroke-linecap="round" stroke-linejoin="round"/>
<path d="M22,7.5 Q31,8 33,16" fill="none" stroke="#444" stroke-width="1.9" stroke-linecap="round" stroke-linejoin="round"/><polyline points="25.5,4 21.5,7.5 25,11.5" fill="none" stroke="#444" stroke-width="1.9" stroke-linecap="round" stroke-linejoin="round"/>
<path d="M7,20.5 Q8,29 15,31" fill="none" stroke="#444" stroke-width="1.9" stroke-linecap="round" stroke-linejoin="round"/><polyline points="11.5,34 15.5,31 12.5,27" fill="none" stroke="#444" stroke-width="1.9" stroke-linecap="round" stroke-linejoin="round"/>
<polyline points="20.5,29 24,32.5 33,21.5" fill="none" stroke="#444" stroke-width="1.9" stroke-linecap="round" stroke-linejoin="round"/>
</svg>
<svg class="a" style="left:1740px;top:949px" width="40" height="40" viewBox="0 0 40 40"><circle cx="20" cy="19.6" r="15.2" fill="none" stroke="#444" stroke-width="1.9" stroke-linecap="round" stroke-linejoin="round"/><line x1="20" y1="11" x2="20" y2="22" fill="none" stroke="#444" stroke-width="1.9" stroke-linecap="round" stroke-linejoin="round"/><circle cx="20" cy="27" r="1.3" fill="#444"/></svg>
<svg class="a" style="left:1740px;top:1018px" width="40" height="40" viewBox="0 0 40 40"><path d="M5.5,5 L35,5 L35,26 L17,26 L10.5,33 L10.5,26 L5.5,26 Z" fill="none" stroke="#444" stroke-width="1.9" stroke-linecap="round" stroke-linejoin="round"/><circle cx="13.5" cy="16" r="1.3" fill="#444"/><circle cx="20" cy="16" r="1.3" fill="#444"/><circle cx="26.5" cy="16" r="1.3" fill="#444"/></svg>
<svg class="a" style="left:1740px;top:1085px" width="40" height="40" viewBox="0 0 40 40"><circle cx="19.8" cy="20" r="15.2" fill="none" stroke="#444" stroke-width="1.9" stroke-linecap="round" stroke-linejoin="round"/><line x1="9.5" y1="30.5" x2="30" y2="9.5" fill="none" stroke="#444" stroke-width="1.9" stroke-linecap="round" stroke-linejoin="round"/></svg>
<svg class="a" style="left:1740px;top:1153px" width="40" height="40" viewBox="0 0 40 40"><path d="M20,5.5 L20,26 M12.5,12.5 L20,5 L27.5,12.5" fill="none" stroke="#444" stroke-width="1.9" stroke-linecap="round" stroke-linejoin="round"/><path d="M5,24 L5,32 Q5,35 8,35 L32,35 Q35,35 35,32 L35,24" fill="none" stroke="#444" stroke-width="1.9" stroke-linecap="round" stroke-linejoin="round"/></svg>
<svg class="a" style="left:1740px;top:1220px" width="40" height="40" viewBox="0 0 40 40"><path d="M14,29 L5.5,29 L5.5,5.5 L26.5,5.5 L26.5,17" fill="none" stroke="#444" stroke-width="1.9" stroke-linecap="round" stroke-linejoin="round"/><line x1="10" y1="12" x2="22" y2="12" fill="none" stroke="#444" stroke-width="1.9" stroke-linecap="round" stroke-linejoin="round"/><line x1="10" y1="17.5" x2="18" y2="17.5" fill="none" stroke="#444" stroke-width="1.9" stroke-linecap="round" stroke-linejoin="round"/><line x1="10" y1="23" x2="14" y2="23" fill="none" stroke="#444" stroke-width="1.9" stroke-linecap="round" stroke-linejoin="round"/><circle cx="26.2" cy="27.6" r="9" fill="none" stroke="#444" stroke-width="1.9" stroke-linecap="round" stroke-linejoin="round"/><line x1="26.2" y1="26" x2="26.2" y2="32" fill="none" stroke="#444" stroke-width="1.9" stroke-linecap="round" stroke-linejoin="round"/><circle cx="26.2" cy="22.8" r="1.2" fill="#444"/></svg>
<div class="t" style="left:1795.00px;top:785.33px;font-size:26.784px;font-weight:400;color:#4a4a4a;">Send email</div>
<div class="t" style="left:1795.00px;top:852.15px;font-size:27.588px;font-weight:400;color:#4a4a4a;">Override compliance</div>
<div class="t" style="left:1795.00px;top:889.34px;font-size:26.534px;font-weight:400;color:#4a4a4a;">status</div>
<div class="t" style="left:1795.00px;top:956.63px;font-size:27.610px;font-weight:400;color:#4a4a4a;">Add exception</div>
<div class="t" style="left:1795.00px;top:1024.95px;font-size:27.226px;font-weight:400;color:#4a4a4a;">Set OA comment status</div>
<div class="t" style="left:1795.00px;top:1093.05px;font-size:27.114px;font-weight:400;color:#4a4a4a;">Exclude from scheme</div>
<div class="t" style="left:1795.00px;top:1160.53px;font-size:27.724px;font-weight:400;color:#4a4a4a;">Deposit</div>
<div class="t" style="left:1795.00px;top:1228.62px;font-size:27.624px;font-weight:400;color:#4a4a4a;">View details</div>
</body></html>
